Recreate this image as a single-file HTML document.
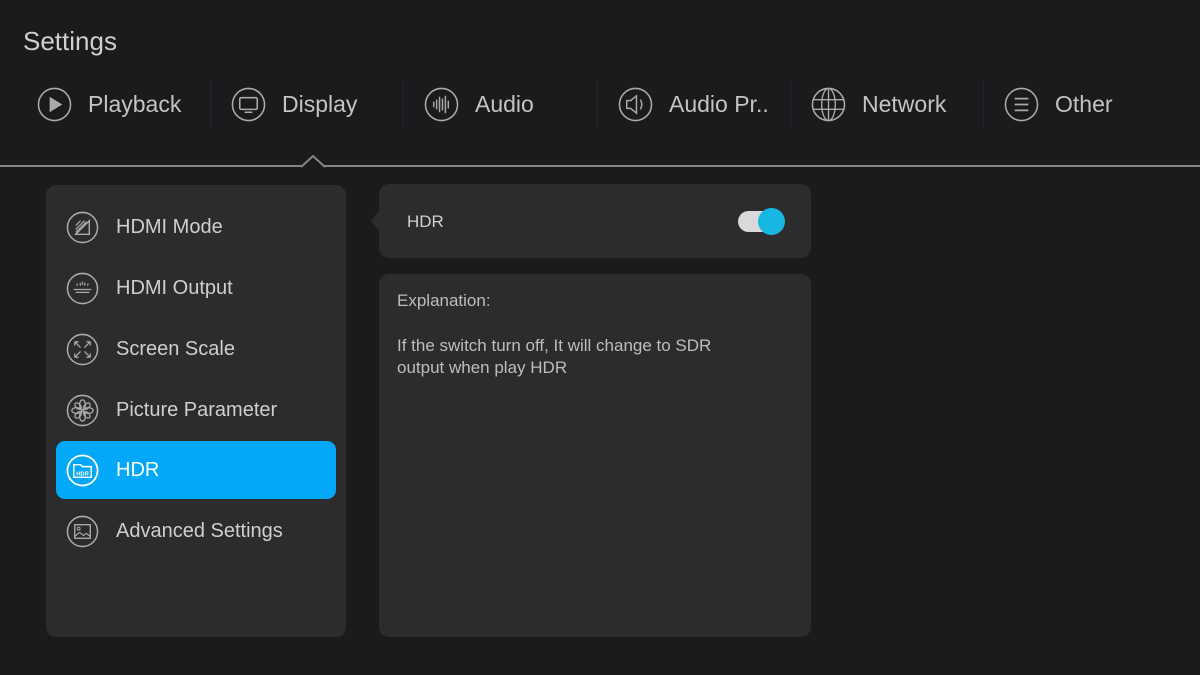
<!DOCTYPE html>
<html><head><meta charset="utf-8"><style>
*{margin:0;padding:0;box-sizing:border-box}
body{width:1200px;height:675px;background:#1b1b1d;font-family:"Liberation Sans",sans-serif;color:#c8c8c8;position:relative;overflow:hidden}
.a{position:absolute}
.title{left:23px;top:26px;font-size:26px;color:#cfcfcf}
.tab{position:absolute;top:84px;height:40px;display:flex;align-items:center;font-size:23px;color:#c4c4c4}
.tab svg{margin-right:16px}
.sep{position:absolute;top:80px;width:1px;height:48px;background:#26262a}
.line{left:0;top:165px;width:1200px;height:2px;background:#858585}
.panel{background:#2c2c2f;border-radius:10px}
.item{position:absolute;left:56px;width:280px;height:58px;display:flex;align-items:center;font-size:20px;color:#cfcfcf}
.item svg{margin-left:10px;margin-right:17px}
.sel{background:#03a9f8;border-radius:9px;color:#fff}
</style></head><body>
<div class="a title">Settings</div>

<div class="tab" style="left:37px"><svg width="35" height="35" viewBox="0 0 36 36"><circle cx="18" cy="18" r="16.5" fill="none" stroke="#aaa" stroke-width="1.6"/><path d="M13 10v16l13-8z" fill="#aaa"/></svg>Playback</div>
<div class="sep" style="left:210px"></div>
<div class="tab" style="left:231px"><svg width="35" height="35" viewBox="0 0 36 36"><circle cx="18" cy="18" r="16.5" fill="none" stroke="#aaa" stroke-width="1.6"/><rect x="9" y="11" width="18" height="12" rx="1.5" fill="none" stroke="#aaa" stroke-width="1.6"/><path d="M14 26h8" stroke="#aaa" stroke-width="1.6"/></svg>Display</div>
<div class="sep" style="left:403px"></div>
<div class="tab" style="left:424px"><svg width="35" height="35" viewBox="0 0 36 36"><circle cx="18" cy="18" r="16.5" fill="none" stroke="#aaa" stroke-width="1.6"/><path d="M10 15v6M13 13v10M16 10v16M19 12v12M22 9v18M25 14v8" stroke="#aaa" stroke-width="1.5"/></svg>Audio</div>
<div class="sep" style="left:597px"></div>
<div class="tab" style="left:618px"><svg width="35" height="35" viewBox="0 0 36 36"><circle cx="18" cy="18" r="16.5" fill="none" stroke="#aaa" stroke-width="1.6"/><path d="M9 14h4l6-5v18l-6-5H9z" fill="none" stroke="#aaa" stroke-width="1.5"/><path d="M23 13q3 5 0 10" fill="none" stroke="#aaa" stroke-width="1.5"/></svg>Audio Pr..</div>
<div class="sep" style="left:790px"></div>
<div class="tab" style="left:811px"><svg width="35" height="35" viewBox="0 0 36 36"><circle cx="18" cy="18" r="16.5" fill="none" stroke="#aaa" stroke-width="1.6"/><ellipse cx="18" cy="18" rx="7" ry="16.5" fill="none" stroke="#aaa" stroke-width="1.4"/><path d="M18 1.5v33M2 13h32M2 23h32" stroke="#aaa" stroke-width="1.4"/></svg>Network</div>
<div class="sep" style="left:983px"></div>
<div class="tab" style="left:1004px"><svg width="35" height="35" viewBox="0 0 36 36"><circle cx="18" cy="18" r="16.5" fill="none" stroke="#aaa" stroke-width="1.6"/><path d="M11 12h14M11 18h14M11 24h14" stroke="#aaa" stroke-width="1.8"/></svg>Other</div>

<div class="a line"></div>
<svg class="a" style="left:301px;top:155px" width="24" height="13" viewBox="0 0 24 13"><path d="M0 12L12 1L24 12" fill="#1b1b1d" stroke="#858585" stroke-width="2"/></svg>

<div class="a panel" style="left:46px;top:185px;width:300px;height:452px"></div>
<div class="item" style="top:198px"><svg width="33" height="33" viewBox="0 0 34 34"><circle cx="17" cy="17" r="15.5" fill="none" stroke="#aaa" stroke-width="1.6"/><path d="M10 24h14V10z" fill="none" stroke="#aaa" stroke-width="1.5"/><path d="M10 19l9-9M10 15l5-5M10 22l11-11" stroke="#aaa" stroke-width="1.2"/></svg>HDMI Mode</div>
<div class="item" style="top:259px"><svg width="33" height="33" viewBox="0 0 34 34"><circle cx="17" cy="17" r="15.5" fill="none" stroke="#aaa" stroke-width="1.6"/><path d="M8 18h18M10 21h14M12 14l-1-2M17 13v-3M22 14l1-2M15 14l-.5-3M19 14l.5-3" stroke="#aaa" stroke-width="1.3"/></svg>HDMI Output</div>
<div class="item" style="top:320px"><svg width="33" height="33" viewBox="0 0 34 34"><circle cx="17" cy="17" r="15.5" fill="none" stroke="#aaa" stroke-width="1.6"/><path d="M9 9l6 6M9 9h4M9 9v4M25 9l-6 6M25 9h-4M25 9v4M9 25l6-6M9 25h4M9 25v-4M25 25l-6-6M25 25h-4M25 25v-4" stroke="#aaa" stroke-width="1.3" fill="none"/></svg>Screen Scale</div>
<div class="item" style="top:381px"><svg width="33" height="33" viewBox="0 0 34 34"><circle cx="17" cy="17" r="15.5" fill="none" stroke="#aaa" stroke-width="1.6"/><g fill="none" stroke="#aaa" stroke-width="1.3"><ellipse cx="17" cy="11" rx="3" ry="5"/><ellipse cx="17" cy="23" rx="3" ry="5"/><ellipse cx="11" cy="17" rx="5" ry="3"/><ellipse cx="23" cy="17" rx="5" ry="3"/><ellipse cx="12.5" cy="12.5" rx="4" ry="2.5" transform="rotate(45 12.5 12.5)"/><ellipse cx="21.5" cy="21.5" rx="4" ry="2.5" transform="rotate(45 21.5 21.5)"/><ellipse cx="21.5" cy="12.5" rx="4" ry="2.5" transform="rotate(-45 21.5 12.5)"/><ellipse cx="12.5" cy="21.5" rx="4" ry="2.5" transform="rotate(-45 12.5 21.5)"/></g></svg>Picture Parameter</div>
<div class="item sel" style="top:441px"><svg width="33" height="33" viewBox="0 0 34 34"><circle cx="17" cy="17" r="15.5" fill="none" stroke="#fff" stroke-width="1.8"/><path d="M8 11h7l2 2h9v11H8z" fill="none" stroke="#fff" stroke-width="1.5"/><text x="17" y="22" font-size="6" font-weight="bold" fill="#fff" text-anchor="middle" font-family="Liberation Sans">HDR</text></svg>HDR</div>
<div class="item" style="top:502px"><svg width="33" height="33" viewBox="0 0 34 34"><circle cx="17" cy="17" r="15.5" fill="none" stroke="#aaa" stroke-width="1.6"/><rect x="9" y="10" width="16" height="14" fill="none" stroke="#aaa" stroke-width="1.4"/><circle cx="13" cy="14" r="1.5" fill="none" stroke="#aaa"/><path d="M9 22l5-4 4 3 3-2 4 3" fill="none" stroke="#aaa" stroke-width="1.2"/></svg>Advanced Settings</div>

<div class="a panel" style="left:379px;top:184px;width:432px;height:74px"></div>
<svg class="a" style="left:370px;top:210px" width="10" height="22" viewBox="0 0 10 22"><path d="M10 0L1 11L10 22z" fill="#2c2c2f"/></svg>
<div class="a" style="left:407px;top:212px;font-size:17px;color:#d0d0d0">HDR</div>
<div class="a" style="left:738px;top:211px;width:42px;height:21px;border-radius:11px;background:#d9d9d9"></div>
<div class="a" style="left:758px;top:208px;width:27px;height:27px;border-radius:50%;background:#18b6e2"></div>

<div class="a panel" style="left:379px;top:274px;width:432px;height:363px"></div>
<div class="a" style="left:397px;top:291px;font-size:17px;color:#bdbdbd">Explanation:</div>
<div class="a" style="left:397px;top:335px;font-size:17px;color:#bdbdbd;line-height:22px;width:400px">If the switch turn off, It will change to SDR<br>output when play HDR</div>
</body></html>
